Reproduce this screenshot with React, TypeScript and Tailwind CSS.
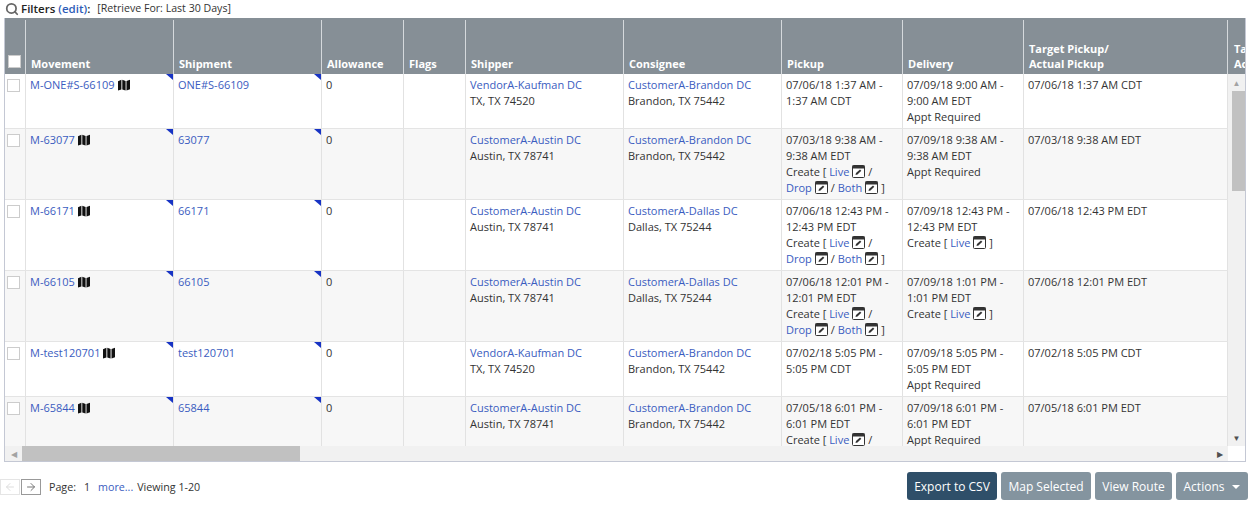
import { Search, ArrowLeft, ArrowRight } from "lucide-react";
import type { ReactNode } from "react";

type Row = {
  movement: string;
  shipment: string;
  shipper: [string, string];
  consignee: [string, string];
  pickup: string[];
  pickupCreate?: boolean;
  delivery: string[];
  deliveryLive?: boolean;
  deliveryAppt?: boolean;
  target: string;
  height: string;
};

const rows: Row[] = [
  {
    movement: "M-ONE#S-66109",
    shipment: "ONE#S-66109",
    shipper: ["VendorA-Kaufman DC", "TX, TX 74520"],
    consignee: ["CustomerA-Brandon DC", "Brandon, TX 75442"],
    pickup: ["07/06/18 1:37 AM -", "1:37 AM CDT"],
    delivery: ["07/09/18 9:00 AM -", "9:00 AM EDT"],
    deliveryAppt: true,
    target: "07/06/18 1:37 AM CDT",
    height: "h-[55px]",
  },
  {
    movement: "M-63077",
    shipment: "63077",
    shipper: ["CustomerA-Austin DC", "Austin, TX 78741"],
    consignee: ["CustomerA-Brandon DC", "Brandon, TX 75442"],
    pickup: ["07/03/18 9:38 AM -", "9:38 AM EDT"],
    pickupCreate: true,
    delivery: ["07/09/18 9:38 AM -", "9:38 AM EDT"],
    deliveryAppt: true,
    target: "07/03/18 9:38 AM EDT",
    height: "h-[71px]",
  },
  {
    movement: "M-66171",
    shipment: "66171",
    shipper: ["CustomerA-Austin DC", "Austin, TX 78741"],
    consignee: ["CustomerA-Dallas DC", "Dallas, TX 75244"],
    pickup: ["07/06/18 12:43 PM -", "12:43 PM EDT"],
    pickupCreate: true,
    delivery: ["07/09/18 12:43 PM -", "12:43 PM EDT"],
    deliveryLive: true,
    target: "07/06/18 12:43 PM EDT",
    height: "h-[71px]",
  },
  {
    movement: "M-66105",
    shipment: "66105",
    shipper: ["CustomerA-Austin DC", "Austin, TX 78741"],
    consignee: ["CustomerA-Dallas DC", "Dallas, TX 75244"],
    pickup: ["07/06/18 12:01 PM -", "12:01 PM EDT"],
    pickupCreate: true,
    delivery: ["07/09/18 1:01 PM -", "1:01 PM EDT"],
    deliveryLive: true,
    target: "07/06/18 12:01 PM EDT",
    height: "h-[71px]",
  },
  {
    movement: "M-test120701",
    shipment: "test120701",
    shipper: ["VendorA-Kaufman DC", "TX, TX 74520"],
    consignee: ["CustomerA-Brandon DC", "Brandon, TX 75442"],
    pickup: ["07/02/18 5:05 PM -", "5:05 PM CDT"],
    delivery: ["07/09/18 5:05 PM -", "5:05 PM EDT"],
    deliveryAppt: true,
    target: "07/02/18 5:05 PM CDT",
    height: "h-[55px]",
  },
  {
    movement: "M-65844",
    shipment: "65844",
    shipper: ["CustomerA-Austin DC", "Austin, TX 78741"],
    consignee: ["CustomerA-Brandon DC", "Brandon, TX 75442"],
    pickup: ["07/05/18 6:01 PM -", "6:01 PM EDT"],
    pickupCreate: true,
    delivery: ["07/09/18 6:01 PM -", "6:01 PM EDT"],
    deliveryAppt: true,
    target: "07/05/18 6:01 PM EDT",
    height: "h-[71px]",
  },
];

function A({ children }: { children: ReactNode }) {
  return <span className="text-[#3a5cc0]">{children}</span>;
}

function MapIcon() {
  return (
    <svg viewBox="0 0 12 12" className="ml-[3px] inline-block h-3 w-3 align-[-2px]">
      <path d="M0 2.2 3.4.8v9.6L0 11.6zM4.3.8l3.3 1.3v9.4l-3.3-1.1zM8.5 2.1 12 .8v9.4l-3.5 1.3z" fill="#111" />
    </svg>
  );
}

function EditIcon() {
  return (
    <svg viewBox="0 0 13 13" className="mx-[3px] inline-block h-[13px] w-[13px] align-[-2px]">
      <rect x="0.5" y="0.5" width="12" height="12" rx="1" fill="#fff" stroke="#333" />
      <rect x="0.5" y="0.5" width="12" height="3" fill="#333" />
      <path d="M3.5 10 4 8l4-3.5 1.3 1.3L5.5 9.5z" fill="#333" />
    </svg>
  );
}

function Corner() {
  return <div className="absolute top-0 right-0 h-0 w-0 border-t-[6px] border-l-[7px] border-t-[#1733c4] border-l-transparent" />;
}

function CreateLinks() {
  return (
    <>
      <div>
        Create [ <A>Live</A>
        <EditIcon />/
      </div>
      <div>
        <A>Drop</A>
        <EditIcon />/ <A>Both</A>
        <EditIcon />]
      </div>
    </>
  );
}

function Head({ className, children }: { className: string; children?: ReactNode }) {
  return (
    <div className={`flex shrink-0 flex-col justify-end border-r border-[#d5d9dc] pb-[3px] pl-[5px] leading-[15px] font-bold text-white ${className}`}>
      {children}
    </div>
  );
}

function Cell({ className, children }: { className: string; children?: ReactNode }) {
  return (
    <div className={`relative shrink-0 border-r border-[#e2e2e2] pt-[3px] pl-[4px] leading-[16px] whitespace-nowrap ${className}`}>
      {children}
    </div>
  );
}

function Btn({ className, children }: { className: string; children: ReactNode }) {
  return (
    <button className={`flex h-[28px] items-center justify-center rounded-[3px] pt-[1px] text-[12px] text-white ${className}`}>
      {children}
    </button>
  );
}

export default function App() {
  return (
    <div className="h-[505px] w-[1258px] overflow-hidden bg-white font-['Open_Sans',sans-serif] text-[11px] text-[#333]">
      <div className="flex h-[18px] items-center pl-[5px]">
        <Search className="h-[14px] w-[14px] text-[#666]" strokeWidth={3} />
        <span className="ml-[2px] text-[11.5px] font-semibold text-[#222]">Filters</span>
        <span className="ml-[3px] text-[11.5px] font-semibold text-[#2d5cb8]">(edit)</span>
        <span className="text-[11.5px] font-semibold text-[#222]">:</span>
        <span className="ml-[7px] text-[10.6px]">[Retrieve For: Last 30 Days]</span>
      </div>

      <div className="ml-[4px] flex h-[444px] w-[1242px] flex-col overflow-hidden border border-t-0 border-[#c4c8d4]">
        <div className="flex h-[56px] shrink-0 bg-[#868f96] pt-[2px]">
          <div className="flex w-[21px] shrink-0 flex-col justify-end border-r border-[#d5d9dc] pb-[2px] pl-[3px]">
            <div className="mb-[4px] h-[13px] w-[13px] border border-[#ccc] bg-white" />
          </div>
          <Head className="w-[148px]">Movement</Head>
          <Head className="w-[148px]">Shipment</Head>
          <Head className="w-[82px]">Allowance</Head>
          <Head className="w-[62px]">Flags</Head>
          <Head className="w-[158px]">Shipper</Head>
          <Head className="w-[158px]">Consignee</Head>
          <Head className="w-[121px]">Pickup</Head>
          <Head className="w-[121px]">Delivery</Head>
          <Head className="w-[204px]">
            <div>Target Pickup/</div>
            <div>Actual Pickup</div>
          </Head>
          <div className="flex min-w-0 flex-1 flex-col justify-end overflow-hidden pb-[3px] pl-[6px] leading-[15px] font-bold whitespace-nowrap text-white">
            <div>Target</div>
            <div>Actual</div>
          </div>
        </div>

        <div className="flex min-h-0 flex-1">
          <div className="min-w-0 flex-1 overflow-hidden">
            {rows.map((r, i) => (
              <div key={r.movement} className={`flex shrink-0 border-b border-[#e4e4e4] ${r.height} ${i % 2 ? "bg-[#f7f7f7]" : "bg-white"}`}>
                <div className="w-[21px] shrink-0 border-r border-[#e2e2e2] pt-[5px] pl-[2px]">
                  <div className="h-[13px] w-[13px] border border-[#ccc] bg-white" />
                </div>
                <Cell className="w-[148px]">
                  <A>{r.movement}</A>
                  <MapIcon />
                  <Corner />
                </Cell>
                <Cell className="w-[148px]">
                  <A>{r.shipment}</A>
                  <Corner />
                </Cell>
                <Cell className="w-[82px]">0</Cell>
                <Cell className="w-[62px]" />
                <Cell className="w-[158px]">
                  <div><A>{r.shipper[0]}</A></div>
                  <div>{r.shipper[1]}</div>
                </Cell>
                <Cell className="w-[158px]">
                  <div><A>{r.consignee[0]}</A></div>
                  <div>{r.consignee[1]}</div>
                </Cell>
                <Cell className="w-[121px]">
                  {r.pickup.map((t) => <div key={t}>{t}</div>)}
                  {r.pickupCreate && <CreateLinks />}
                </Cell>
                <Cell className="w-[121px]">
                  {r.delivery.map((t) => <div key={t}>{t}</div>)}
                  {r.deliveryAppt && <div>Appt Required</div>}
                  {r.deliveryLive && (
                    <div>
                      Create [ <A>Live</A>
                      <EditIcon />]
                    </div>
                  )}
                </Cell>
                <Cell className="w-[204px]">{r.target}</Cell>
              </div>
            ))}
          </div>

          <div className="flex w-[17px] shrink-0 flex-col bg-[#f1f1f1]">
            <div className="flex h-[17px] items-center justify-center text-[8px] leading-none text-[#a3a3a3]">▲</div>
            <div className="ml-[4px] h-[100px] bg-[#c1c1c1]" />
            <div className="flex-1" />
            <div className="flex h-[17px] items-center justify-center text-[8px] leading-none text-[#505050]">▼</div>
          </div>
        </div>

        <div className="flex h-[15px] shrink-0 items-center bg-[#f1f1f1]">
          <div className="flex w-[17px] shrink-0 items-center justify-center text-[8px] leading-none text-[#a3a3a3]">◀</div>
          <div className="h-full w-[278px] bg-[#c1c1c1]" />
          <div className="flex-1" />
          <div className="flex w-[17px] shrink-0 items-center justify-center text-[8px] leading-none text-[#505050]">▶</div>
          <div className="h-full w-[17px] bg-white" />
        </div>
      </div>

      <div className="flex h-[43px] items-start justify-between pr-[10px]">
        <div className="mt-[17px] flex items-center">
          <div className="flex h-[16px] w-[20px] items-center justify-center border border-[#e5e5e5]">
            <ArrowLeft className="h-3 w-3 text-[#ddd]" />
          </div>
          <div className="ml-[1px] flex h-[16px] w-[20px] items-center justify-center border border-[#999]">
            <ArrowRight className="h-3 w-3 text-[#777]" />
          </div>
          <span className="ml-[8px] text-[10.7px]">Page:</span>
          <span className="ml-[8px] text-[10.7px]">1</span>
          <span className="ml-[8px] text-[10.7px] text-[#3a5cc0]">more...</span>
          <span className="ml-[4px] text-[10.7px]">Viewing 1-20</span>
        </div>
        <div className="mt-[10px] flex gap-[4px]">
          <Btn className="w-[90px] bg-[#2f4f69]">Export to CSV</Btn>
          <Btn className="w-[90px] bg-[#84949f]">Map Selected</Btn>
          <Btn className="w-[77px] bg-[#84949f]">View Route</Btn>
          <Btn className="w-[72px] bg-[#84949f]">
            Actions
            <span className="ml-[8px] h-0 w-0 border-t-[4px] border-r-[4px] border-l-[4px] border-t-white border-r-transparent border-l-transparent" />
          </Btn>
        </div>
      </div>
    </div>
  );
}
